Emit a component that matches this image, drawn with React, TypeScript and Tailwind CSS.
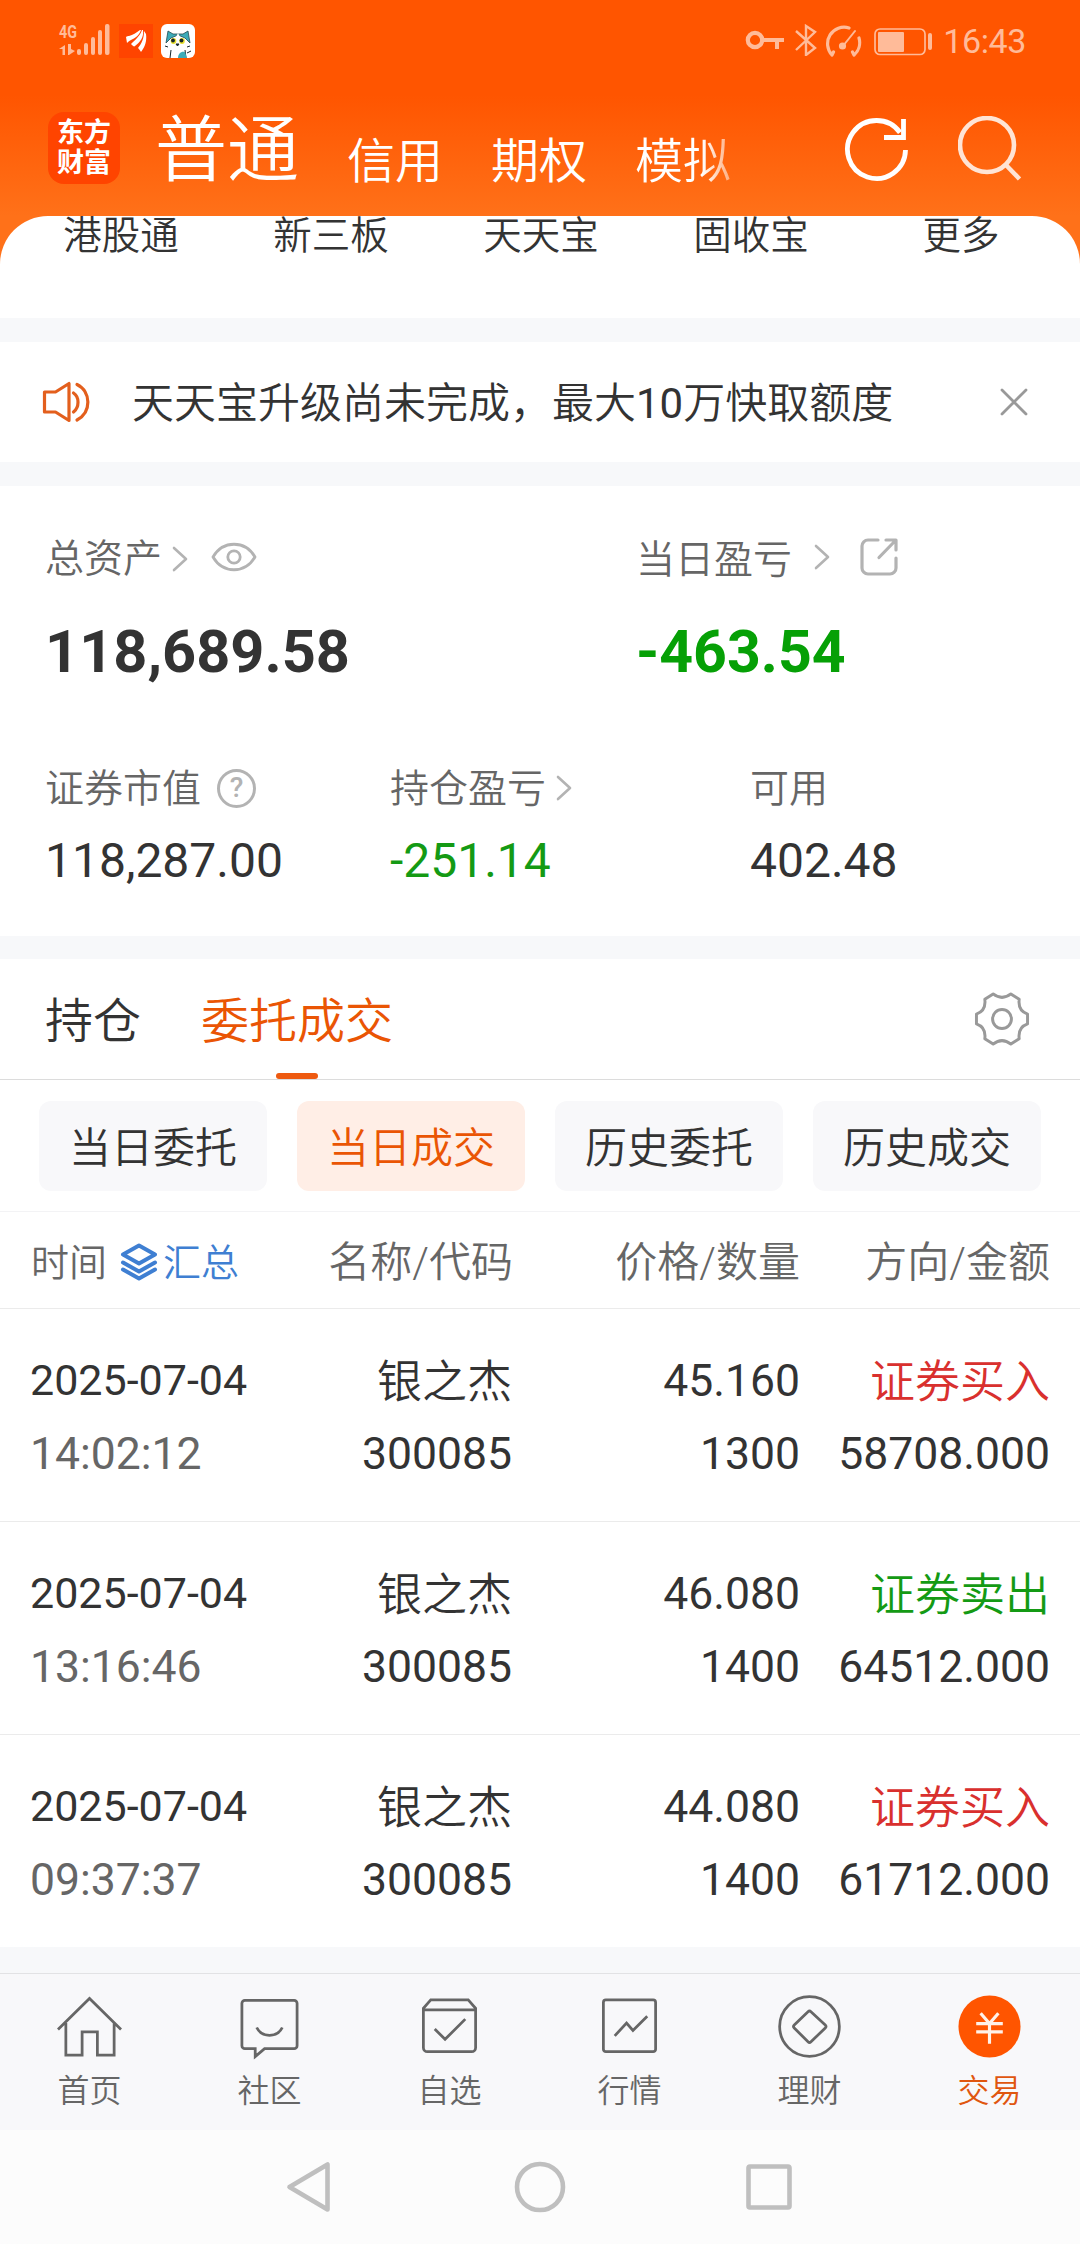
const menu = ["港股通", "新三板", "天天宝", "固收宝", "更多"];

const filters = ["当日委托", "当日成交", "历史委托", "历史成交"];

const deals = [
  { date: "2025-07-04", time: "14:02:12", name: "银之杰", code: "300085", price: "45.160", qty: "1300", side: "证券买入", amount: "58708.000" },
  { date: "2025-07-04", time: "13:16:46", name: "银之杰", code: "300085", price: "46.080", qty: "1400", side: "证券卖出", amount: "64512.000" },
  { date: "2025-07-04", time: "09:37:37", name: "银之杰", code: "300085", price: "44.080", qty: "1400", side: "证券买入", amount: "61712.000" },
];

function Chevron({ className = "" }: { className?: string }) {
  return (
    <svg className={`h-[26px] w-4 ${className}`} viewBox="0 0 16 26" fill="none" stroke="#b3b3b3" strokeWidth="2.6" strokeLinecap="round" strokeLinejoin="round">
      <path d="M2 2l12 11L2 24" />
    </svg>
  );
}

function StatusBar() {
  return (
    <div className="flex h-20 items-start pl-[58px] pr-[54px] text-[#ffbb99]">
      <svg className="mt-4 h-[42px] w-[53px]" viewBox="0 -8 53 42" fill="currentColor">
        <text x="1" y="14" fontFamily="Roboto" fontSize="19" fontWeight="700" textLength="18" lengthAdjust="spacingAndGlyphs">4G</text>
        <path d="M1 25l6-4v10H4.500v-6zM10 20h3v5l4 2-6 4h-1z" />
        <rect x="19" y="25" width="4" height="6" rx="2" />
        <rect x="26" y="19" width="4" height="12" rx="2" />
        <rect x="33" y="13" width="4" height="18" rx="2" />
        <rect x="40" y="6" width="4" height="25" rx="2" />
        <rect x="47" y="0" width="4.500" height="31" rx="2" />
      </svg>
      <svg className="ml-2 mt-6 h-[34px] w-[34px]" viewBox="0 0 34 34">
        <rect width="34" height="34" fill="#ff4400" />
        <g fill="#fff">
          <path d="M7 13c1-1 2-1 3-1 4-1 7-3 11-6h1c-2 6-6 8-10 10-2 1-3 2-4 3z" />
          <path d="M12 20c4-4 9-8 11-14h1c1 8-3 12-8 16-1 1-2 0-4-2z" />
          <path d="M19 24c4-5 6-10 6-17l2 3c1 7-1 13-5 18-1-2-2-3-3-4z" />
        </g>
      </svg>
      <svg className="ml-2 mt-6 h-[34px] w-[34px]" viewBox="0 0 34 34">
        <rect width="34" height="34" rx="6" fill="#fff" />
        <path d="M5 19L7 7l5 3h10l5-3 2 12-5-5-7-3-7 3z" fill="#3cabb8" stroke="#244b52" strokeWidth=".8" />
        <path d="M17 9l-4 8h8z" fill="#fff" />
        <ellipse cx="12.500" cy="17" rx="2.800" ry="3" fill="#e9e22f" />
        <ellipse cx="21" cy="17" rx="2.800" ry="3" fill="#e9e22f" />
        <circle cx="12" cy="16.500" r="1.900" fill="#15252a" />
        <circle cx="20.500" cy="16.500" r="1.900" fill="#15252a" />
        <path d="M15 20h3l-1.500 2zM10 26l-1 8M25 34l-1-8M4 22l3 1M29 22l-3 1M26 29l4-2" stroke="#15252a" fill="#15252a" />
        <path d="M17 34c0-4 3-7 7-6l2 6z" fill="#3cabb8" />
      </svg>
      <svg className="ml-auto mt-[30px] h-5 w-10" viewBox="0 0 40 20" fill="none" stroke="currentColor">
        <circle cx="10" cy="10" r="7.200" strokeWidth="4.200" />
        <path d="M17 10h22M32 10v9" strokeWidth="4" />
      </svg>
      <svg className="ml-2.5 mt-6 h-8 w-[22px]" viewBox="0 0 22 32" fill="none" stroke="currentColor" strokeWidth="2.400">
        <path d="M1 7l19 17-9 7V2l9 6L1 26" />
      </svg>
      <svg className="ml-[7px] mt-[25px] h-8 w-[38px]" viewBox="0 0 38 32" fill="none" stroke="currentColor" strokeWidth="3.200" strokeLinecap="round">
        <path d="M8 30A16.500 16.500 0 0 1 25 3M35 13A16.500 16.500 0 0 1 30 30M8 30l1.500-3M30 30l-1.500-3" />
        <path d="M19 21L31 6" strokeWidth="2" />
        <circle cx="18.500" cy="21" r="2" fill="currentColor" />
      </svg>
      <svg className="ml-3 mt-7 h-7 w-[60px]" viewBox="0 0 60 28" fill="none" stroke="currentColor">
        <rect x="1" y="1" width="50" height="25.500" rx="5" strokeWidth="1.700" />
        <rect x="4" y="4" width="26" height="20" rx="1" fill="currentColor" stroke="none" />
        <rect x="54" y="5" width="4" height="17" rx="2" fill="currentColor" stroke="none" />
      </svg>
      <span className="ml-[9px] mt-[21px] text-[34px] leading-[40px] tracking-[-0.4px]">16:43</span>
    </div>
  );
}

function TitleBar() {
  return (
    <div className="flex h-[136px] items-start pl-12 pr-[58px] text-white">
      <div className="mt-8 flex h-[72px] w-[72px] flex-col items-center justify-center rounded-2xl bg-[#ff4400] text-[27px] font-bold leading-[30px]">
        <span>东方</span>
        <span>财富</span>
      </div>
      <div className="ml-[35px] flex items-start gap-12 pt-[42px] text-[48px] font-[350] leading-[80px]">
        <span className="mt-[-11px] text-[72px]">普通</span>
        <span>信用</span>
        <span>期权</span>
        <span className="bg-linear-to-r from-white from-70% to-white/45 bg-clip-text text-transparent">模拟</span>
      </div>
      <svg className="ml-auto mt-[35px] h-[68px] w-[68px]" viewBox="0 0 68 68" fill="none" stroke="currentColor" strokeWidth="4.800">
        <path d="M62.500 35A29 29 0 1 1 57 17.500" />
        <path d="M60.500 4v18.500H41" />
      </svg>
      <svg className="ml-[47px] mt-9 h-[68px] w-[64px]" viewBox="0 0 64 68" fill="none" stroke="#ffe4d5" strokeWidth="4.600">
        <circle cx="29" cy="29" r="27" />
        <path d="M47 48l14.500 15" />
      </svg>
    </div>
  );
}

function Notice() {
  return (
    <div className="flex h-[120px] items-center bg-white pl-[42px] pr-[52px]">
      <svg className="h-11 w-12" viewBox="0 0 48 44" fill="none" stroke="#e35f1d" strokeWidth="3.200" strokeLinecap="round" strokeLinejoin="round">
        <path d="M2.500 12h11L27 3.500v37L13.500 32h-11z" />
        <path d="M31.500 13c6 4 6 14 0 19M35 4.500c14.500 7 14.500 28 0 35.500" />
      </svg>
      <span className="ml-[42px] mt-0.5 text-[42px] font-[350] text-[#333]">
        天天宝升级尚未完成，最大<span className="font-normal">10</span>万快取额度
      </span>
      <svg className="ml-auto h-7 w-7" viewBox="0 0 28 28" stroke="#999" strokeWidth="2.800" strokeLinecap="round">
        <path d="M2 2l24 24M26 2L2 26" />
      </svg>
    </div>
  );
}

function Assets() {
  return (
    <section className="mt-6 h-[450px] bg-white pt-[49px] text-[#333]">
      <div className="grid grid-cols-[591px_1fr] pl-[45px]">
        <div>
          <div className="flex h-12 items-center text-[39px] font-[350] text-[#666]">
            总资产
            <Chevron className="ml-2.5" />
            <svg className="ml-[22px] mt-[-5px] h-8 w-12" viewBox="0 0 48 32" fill="none" stroke="#b3b3b3" strokeWidth="2.800">
              <path d="M3 16C13-1 35-1 45 16 35 33 13 33 3 16z" strokeLinejoin="round" />
              <circle cx="24" cy="16" r="6.200" />
            </svg>
          </div>
          <div className="mt-[33px] text-[59.500px] font-bold leading-[72px]">118,689.58</div>
        </div>
        <div>
          <div className="flex h-12 items-center text-[39px] font-[350] text-[#666]">
            <span className="mt-[3px]">当日盈亏</span>
            <Chevron className="ml-[22px] mt-[-4px]" />
            <svg className="ml-[29px] mt-[-4px] h-10 w-10" viewBox="0 0 40 40" fill="none" stroke="#b3b3b3" strokeWidth="3.200" strokeLinecap="round" strokeLinejoin="round">
              <path d="M19 3H9a6 6 0 0 0-6 6v22a6 6 0 0 0 6 6h22a6 6 0 0 0 6-6V21M27 3h10v10M36 4L20 20.500" />
            </svg>
          </div>
          <div className="mt-[33px] text-[59px] font-bold leading-[72px] text-[#06a006]">-463.54</div>
        </div>
      </div>
      <div className="mt-[76px] grid grid-cols-[345px_360px_1fr] pl-[45px]">
        <div>
          <div className="flex h-12 items-center text-[39px] font-[350] text-[#666]">
            <span className="mt-0.5">证券市值</span>
            <span className="ml-4 flex h-[39px] w-[39px] items-center justify-center rounded-full border-[3px] border-[#b3b3b3] text-[28px] font-medium leading-none text-[#b3b3b3]">?</span>
          </div>
          <div className="mt-[19px] text-[48px] leading-[60px]">118,287.00</div>
        </div>
        <div>
          <div className="flex h-12 items-center text-[39px] font-[350] text-[#666]">
            <span className="mt-0.5">持仓盈亏</span>
            <Chevron className="ml-2.5" />
          </div>
          <div className="mt-[19px] text-[48px] leading-[60px] text-[#149a14]">-251.14</div>
        </div>
        <div>
          <div className="flex h-12 items-center text-[39px] font-[350] text-[#666]">
            <span className="mt-0.5">可用</span>
          </div>
          <div className="mt-[19px] text-[48px] leading-[60px]">402.48</div>
        </div>
      </div>
    </section>
  );
}

function Tabs() {
  return (
    <div className="flex h-[121px] items-stretch border-b border-[#dcdcdc] bg-white pl-[45px] pr-[50px] text-[48px] font-[350] text-[#333]">
      <span className="flex items-center pt-[5px]">持仓</span>
      <span className="relative ml-[60px] flex items-center pt-[5px] text-[#ea5504]">
        委托成交
        <i className="absolute bottom-0 left-1/2 h-1.5 w-[42px] -translate-x-1/2 rounded-full bg-[#ee5a10]" />
      </span>
      <svg className="ml-auto h-14 w-14 self-center" viewBox="-0.500 -0.500 57 57" fill="none" stroke="#999" strokeWidth="3" strokeLinejoin="round">
        <path d="M19 2.500q9 7 18 0l8.500 5.500q-1.500 11.500 8.500 15v10q-10 3.500-8.500 15L37 53.500q-9-7-18 0L10.500 48Q12 36.500 2 33V23q10-3.500 8.500-15z" />
        <circle cx="28" cy="28" r="9.600" />
      </svg>
    </div>
  );
}

function Filters() {
  return (
    <div className="flex h-[132px] justify-between border-b border-[#f3f3f5] bg-white px-[39px] pt-[21px]">
      {filters.map((label) => (
        <span
          key={label}
          className={`flex h-[90px] w-[228px] items-center justify-center rounded-xl pt-1 text-[42px] font-[350] ${label === "当日成交" ? "bg-[#ffeee6] text-[#ea5504]" : "bg-[#f8f8fa] text-[#333]"}`}
        >
          {label}
        </span>
      ))}
    </div>
  );
}

function Deals() {
  return (
    <section className="bg-white">
      <div className="grid h-[97px] grid-cols-[230px_252px_287px_250px] items-center border-b border-[#ebebeb] pl-[31px] pt-1 text-right text-[42px] font-[350] text-[#666]">
        <div className="flex items-center text-[38px]">
          <span className="mt-[3px]">时间</span>
          <svg className="ml-[12px] h-10 w-10" viewBox="0 0 40 40" fill="none" stroke="#3f7fd2" strokeWidth="4" strokeLinecap="round" strokeLinejoin="round">
            <path d="M20 3.500l16 9-16 9-16-9zM4 20.500l16 9 16-9M4 27.500l16 9 16-9" />
          </svg>
          <span className="ml-1 mt-[3px] text-[#3f7fd2]">汇总</span>
        </div>
        <span>名称/代码</span>
        <span>价格/数量</span>
        <span>方向/金额</span>
      </div>
      {deals.map((d) => (
        <div key={d.time} className="grid h-[213px] grid-cols-[230px_251px_288px_250px] content-start border-b border-[#ebebeb] pl-[31px] pt-[35px] text-right text-[44.500px] leading-[73px] text-[#333] last:h-[212px] last:border-b-0">
          <span className="ml-[-1px] text-left text-[43px]">{d.date}</span>
          <span className="relative top-0.5 text-[45px] font-[350]">{d.name}</span>
          <span className="relative top-px">{d.price}</span>
          <span className={`relative top-0.5 text-[45px] font-[350] ${d.side === "证券买入" ? "text-[#d9302e]" : "text-[#149a14]"}`}>{d.side}</span>
          <span className="mt-px ml-[-1px] text-left text-[#666]">{d.time}</span>
          <span className="mt-px">{d.code}</span>
          <span className="mt-px">{d.qty}</span>
          <span className="mt-px">{d.amount}</span>
        </div>
      ))}
    </section>
  );
}

const navItems = [
  {
    label: "首页",
    icon: <path d="M2 34.500L34 3l32 31.500M10 28v32.500h16.500V37H42v23.500h17V28" />,
  },
  {
    label: "社区",
    icon: <path d="M9 5h50a3 3 0 0 1 3 3v43a3 3 0 0 1-3 3H29l-9.500 8v-8H9a3 3 0 0 1-3-3V8a3 3 0 0 1 3-3zM21 32.500c5 10.500 21 10.500 26 0" />,
  },
  {
    label: "自选",
    icon: <path d="M15 4.500h38l7.500 8.500v40a4 4 0 0 1-4 4h-45a4 4 0 0 1-4-4V13zM7.500 14.500h53M19 34l10.500 10.500L50 24" />,
  },
  {
    label: "行情",
    icon: <path d="M10 4.500h48a2.500 2.500 0 0 1 2.500 2.500v47.500a2.500 2.500 0 0 1-2.500 2.500H10a2.500 2.500 0 0 1-2.500-2.500V7A2.500 2.500 0 0 1 10 4.500zM19 41l12-13 6.500 7.500L52 21" />,
  },
  {
    label: "理财",
    icon: (
      <>
        <circle cx="34" cy="31.500" r="30.300" />
        <path d="M32.500 16.500q1.500-1.500 3 0L50 30q1.500 1.500 0 3L35.500 47q-1.500 1.500-3 0L18.500 33q-1.500-1.500 0-3z" />
      </>
    ),
  },
  {
    label: "交易",
    icon: (
      <>
        <circle cx="34" cy="31.500" r="31.500" fill="#ff5500" stroke="none" />
        <path d="M25 18l9 10.500L43 18M20.500 28.500h27M20.500 37h27M34 28v21" stroke="#fff1e8" strokeWidth="3.200" />
      </>
    ),
  },
];

function BottomNav() {
  return (
    <nav className="mt-[26px] grid h-[157px] grid-cols-6 border-t border-[#e2e2e4] bg-[#f8f8fa]">
      {navItems.map((item) => (
        <div key={item.label} className={`flex flex-col items-center pr-px pt-[21px] text-[32px] font-[350] leading-[44px] ${item.label === "交易" ? "text-[#e0560f]" : "text-[#666]"}`}>
          <svg className="h-[66px] w-[67px]" viewBox="0 0 68 66" fill="none" stroke="#666" strokeWidth="2.800">
            {item.icon}
          </svg>
          <span className="mt-2">{item.label}</span>
        </div>
      ))}
    </nav>
  );
}

function SystemNav() {
  return (
    <div className="flex h-[114px] items-center bg-[#fcfcfc] pl-[285px]">
      <svg className="h-[54px] w-[510px]" viewBox="0 0 510 54" fill="none" stroke="#bfbfbf" strokeWidth="4.600" strokeLinejoin="round">
        <path d="M42.500 4.500v45L4.500 27z" />
        <circle cx="255" cy="27" r="23" />
        <rect x="463.500" y="6.500" width="41" height="41" rx="1.500" />
      </svg>
    </div>
  );
}

export default function App() {
  return (
    <div className="w-[1080px] overflow-hidden bg-[#f7f8fa] font-['Roboto','Noto_Sans_CJK_SC',sans-serif]">
      <header className="h-[264px] bg-[linear-gradient(#ff5500_95px,#ff7119_216px)]">
        <StatusBar />
        <TitleBar />
        <div className="grid h-[102px] grid-cols-5 rounded-t-[48px] bg-white pl-4 pr-[14px] text-center text-[38.500px] font-[350] leading-[40px] text-[#333]">
          {menu.map((label) => (
            <span key={label}>{label}</span>
          ))}
        </div>
      </header>
      <div className="mt-[78px]">
        <Notice />
      </div>
      <Assets />
      <div className="mt-[23px]">
        <Tabs />
      </div>
      <Filters />
      <Deals />
      <BottomNav />
      <SystemNav />
    </div>
  );
}
